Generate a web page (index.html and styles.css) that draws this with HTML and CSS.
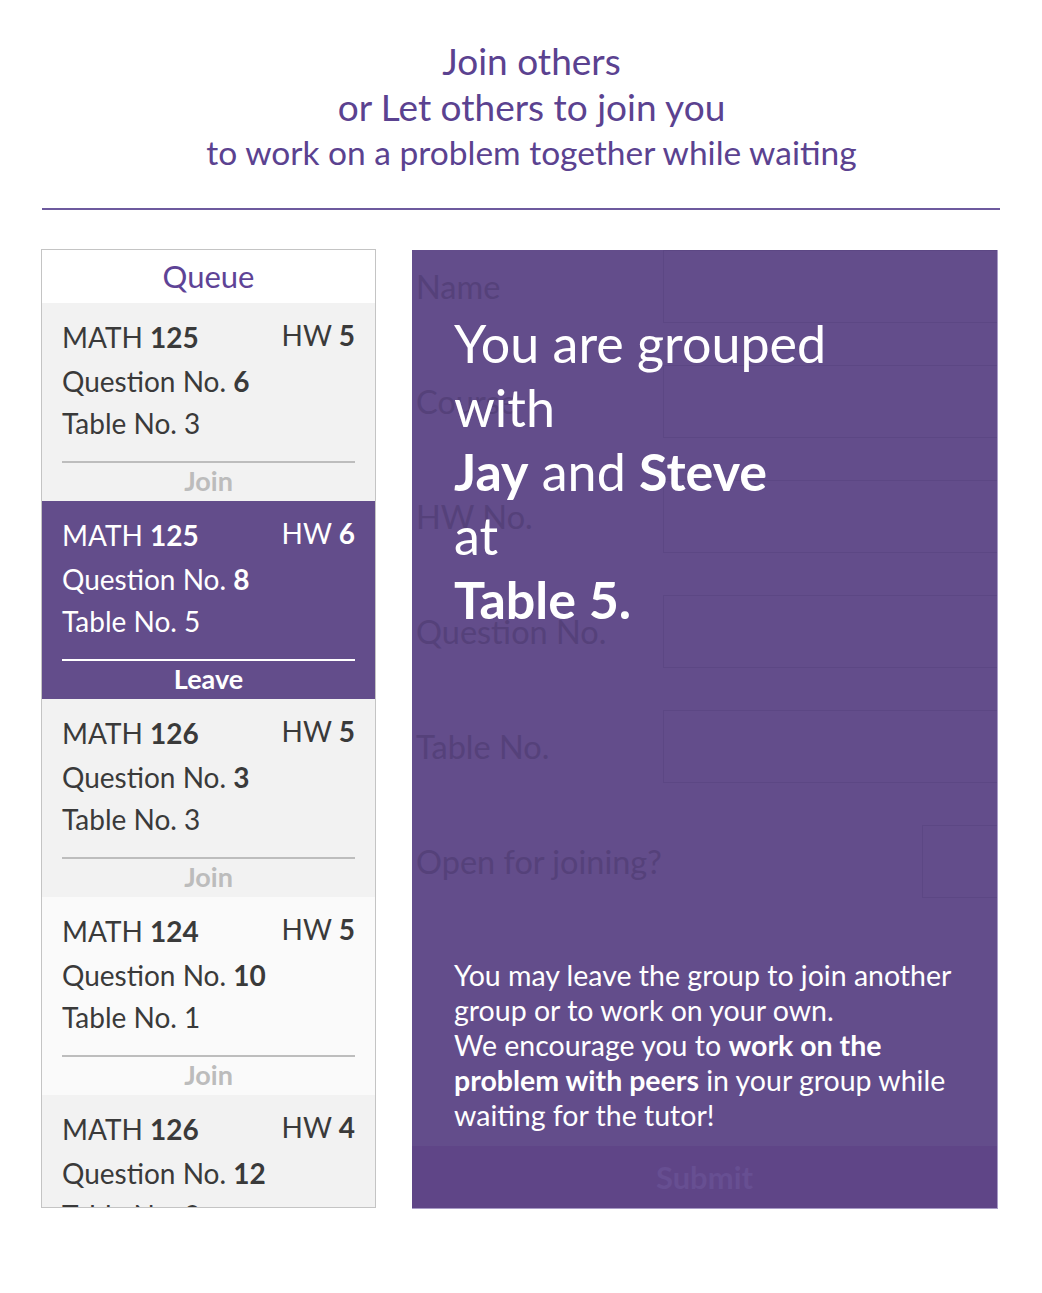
FILE: index.html
```html
<!DOCTYPE html>
<html>
<head>
<meta charset="utf-8">
<title>Queue</title>
<link rel="stylesheet" href="styles.css">
</head>
<body>
<div class="page">
  <header class="intro">
    <div class="intro-l1">Join others</div>
    <div class="intro-l2">or Let others to join you</div>
    <div class="intro-l3">to work on a problem together while waiting</div>
  </header>
  <hr class="rule">
  <main class="columns">
    <section class="queue">
      <div class="queue-head">Queue</div>
      <div class="item item-grey">
        <div class="item-top"><span>MATH <b>125</b></span><span>HW <b>5</b></span></div>
        <div class="item-line">Question No. <b>6</b></div>
        <div class="item-line">Table No. 3</div>
        <div class="item-action">Join</div>
      </div>
      <div class="item item-active">
        <div class="item-top"><span>MATH <b>125</b></span><span>HW <b>6</b></span></div>
        <div class="item-line">Question No. <b>8</b></div>
        <div class="item-line">Table No. 5</div>
        <div class="item-action">Leave</div>
      </div>
      <div class="item item-grey">
        <div class="item-top"><span>MATH <b>126</b></span><span>HW <b>5</b></span></div>
        <div class="item-line">Question No. <b>3</b></div>
        <div class="item-line">Table No. 3</div>
        <div class="item-action">Join</div>
      </div>
      <div class="item item-light">
        <div class="item-top"><span>MATH <b>124</b></span><span>HW <b>5</b></span></div>
        <div class="item-line">Question No. <b>10</b></div>
        <div class="item-line">Table No. 1</div>
        <div class="item-action">Join</div>
      </div>
      <div class="item item-grey">
        <div class="item-top"><span>MATH <b>126</b></span><span>HW <b>4</b></span></div>
        <div class="item-line">Question No. <b>12</b></div>
        <div class="item-line">Table No. 3</div>
        <div class="item-action">Join</div>
      </div>
    </section>
    <section class="panel">
      <form class="form">
        <label class="f-label">Name</label><div class="f-input"></div>
        <label class="f-label">Course</label><div class="f-input"></div>
        <label class="f-label">HW No.</label><div class="f-input"></div>
        <label class="f-label">Question No.</label><div class="f-input"></div>
        <label class="f-label">Table No.</label><div class="f-input"></div>
        <label class="f-label">Open for joining?</label><div class="f-check"></div>
      </form>
      <div class="submit">Submit</div>
      <div class="overlay">
        <div class="msg">
          You are grouped<br>with<br><b>Jay</b> and <b>Steve</b><br>at<br><b>Table 5.</b>
        </div>
        <p class="note">You may leave the group to join another<br>group or to work on your own.<br>We encourage you to <b>work on the<br>problem with peers</b> in your group while<br>waiting for the tutor!</p>
      </div>
    </section>
  </main>
</div>
</body>
</html>
```
FILE: styles.css
```css
* { box-sizing: border-box; }
html, body { margin: 0; padding: 0; background: #fff; }
body { font-family: Lato, "Open Sans", "DejaVu Sans", sans-serif; }

.page { padding: 38px 42px 0 41px; }

.intro { text-align: center; color: #5b4290; padding-left: 22px; }
.intro-l1, .intro-l2 { font-size: 37px; line-height: 46px; }
.intro-l3 { font-size: 33.5px; line-height: 44px; }

.rule { margin: 34px 0 0 1px; border: 0; height: 2px; background: #6d5a9e; }

.columns { display: flex; gap: 36px; margin-top: 39px; align-items: flex-start; }

.queue {
  width: 335px; height: 959px; overflow: hidden;
  border: 1px solid #c4c4c4; background: #f2f2f2;
}
.queue-head {
  height: 53px; background: #fff; color: #5e4396;
  text-align: center; font-size: 31px; line-height: 53px;
}
.item { padding: 12px 20px 0 20px; height: 198px; color: #3a3a3a; font-size: 28px; }
.item b { font-weight: 700; }
.item-grey { background: #f2f2f2; }
.item-light { background: #fafafa; }
.item-active { background: #634d8b; color: #fff; }
.item-top { display: flex; justify-content: space-between; line-height: 44px; }
.item-top span:last-child { position: relative; top: -2px; }
.item-line { line-height: 44px; }
.item-line + .item-line { margin-top: -2px; }
.item-action {
  margin-top: 16px; border-top: 2px solid #bdbdbd; color: #bcbcbc;
  text-align: center; font-weight: 700; font-size: 27px; line-height: 36px;
}
.item-active .item-action { border-top-color: #fff; color: #fff; }

.panel {
  position: relative; width: 586px; height: 959px;
  background: #634d8b; border-right: 1px solid #a89bc6; border-bottom: 1px solid #a89bc6;
  margin-top: 1px;
}
.form {
  display: grid; grid-template-columns: 247px 1fr; row-gap: 42px;
  grid-auto-rows: 73px; padding-left: 4px;
}
.f-label { align-self: center; font-size: 32.5px; color: #55417a; }
.f-input { border: 1px solid #5c4784; border-right: 0; }
.f-check { justify-self: end; width: 75px; border: 1px solid #5c4784; border-right: 0; }
.submit {
  position: absolute; left: 0; right: 0; bottom: 0; height: 62px;
  background: #5f4587; color: #674f92; text-align: center;
  font-size: 31px; font-weight: 700; line-height: 62px;
}
.overlay {
  position: absolute; inset: 0; padding: 61px 30px 0 42px; color: #fff;
}
.msg { font-size: 52px; line-height: 64px; }
.msg b { font-weight: 700; }
.note { margin: 327px 0 0 0; font-size: 28.5px; line-height: 35px; }
.note b { font-weight: 700; }
```
